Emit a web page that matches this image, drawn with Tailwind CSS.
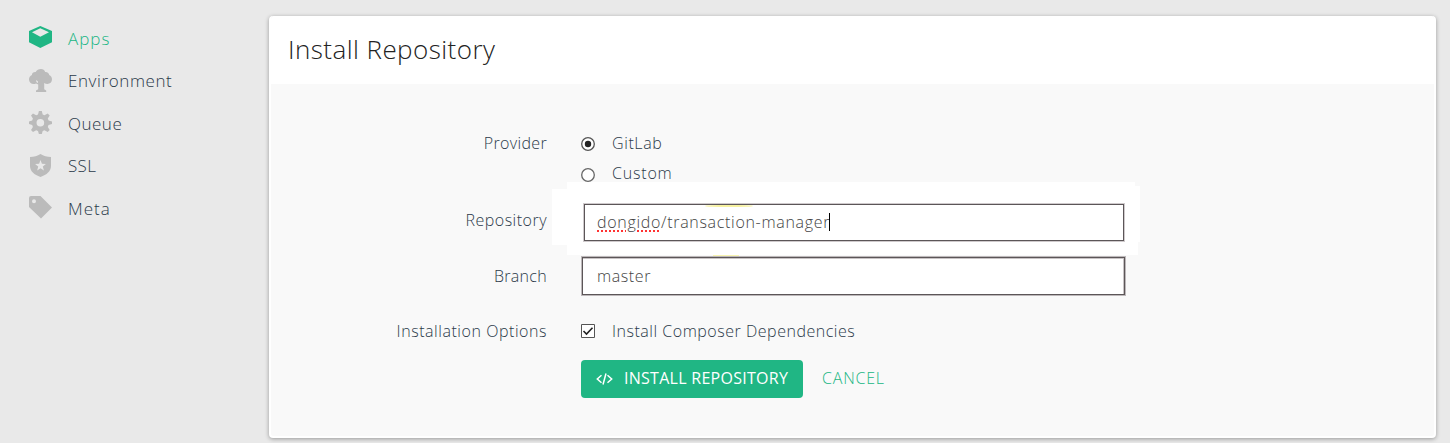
<!DOCTYPE html>
<html lang="en">
<head>
<meta charset="utf-8">
<title>Install Repository</title>
<script src="https://cdn.jsdelivr.net/npm/@tailwindcss/browser@4"></script>
</head>
<body class="h-[443px] overflow-hidden bg-[#e9e9e9] font-['Open_Sans',sans-serif] font-light text-[#2b3a49]">
<div class="flex h-full">
  <nav class="w-[269px] shrink-0 pt-[17px] pl-[28px] text-[17px]">
    <a class="flex h-[42.5px] items-center gap-[16px] text-[#20b684]">
      <svg class="-mt-[2px] size-6 shrink-0" viewBox="0 0 24 24" fill="currentColor"><path fill-rule="evenodd" d="M12.300 1 24 6v11.200L12.300 23 1 17.200V6zM12.300 3.200 4 7.200l8.300 4.600 8.700-4.600z"/></svg>
      <span class="whitespace-nowrap tracking-[1px]">Apps</span></a>
    <a class="flex h-[42.5px] items-center gap-[16px]">
      <svg class="-mt-[2px] size-6 shrink-0 text-[#bbb]" viewBox="0 0 24 24" fill="currentColor"><path d="M13 1c2 0 3.700 1.100 4.200 2.900 2.200-.2 4 1.200 4 3.100 1.800.7 2.800 2.300 2.800 4.300 0 2.800-2 4.700-4.600 4.700-1.300 0-2.400-.4-3.200-1v6.200l2 1.300V24H8v-1.500l2.200-1.300v-4.700l-2.200-1c-.7.400-1.500.5-2.300.5C3 16 1 14.100 1 11.400c0-2 1.100-3.600 2.900-4.400C3.900 5 5.500 3.700 7.700 3.900 8.500 2.100 10.800 1 13 1zM8.200 11.900c-.2 1.200.1 2.200 1.800 3.200v-1.600z"/></svg>
      <span class="whitespace-nowrap tracking-[0.600px]">Environment</span></a>
    <a class="flex h-[42.5px] items-center gap-[16px]">
      <svg class="-mt-[2px] size-6 shrink-0 text-[#bbb]" viewBox="0 0 24 24" fill="currentColor"><path fill-rule="evenodd" d="m10.900 1 2.900 0 .9 3.500 1.800.8 3.200-1.900 2 2-1.900 3.200.8 1.900 3.400.9v2.700l-3.500.9-.7 1.900 1.900 3.100-2 2-3.200-1.800-1.800.7-.9 3.100h-2.900L10 20.900l-1.800-.7L5 22l-2-2 1.900-3.100-.7-1.900-3.200-.9v-2.700l3.200-.9.7-1.900L3 5.400l2-2 3.200 1.900 1.800-.8zM12.300 8.900a3.800 3.800 0 1 0 .1 7.600 3.800 3.800 0 0 0-.1-7.600z"/></svg>
      <span class="whitespace-nowrap tracking-[0.500px]">Queue</span></a>
    <a class="flex h-[42.5px] items-center gap-[16px]">
      <svg class="-mt-[2px] size-6 shrink-0 text-[#bbb]" viewBox="0 0 24 24" fill="currentColor"><path fill-rule="evenodd" d="M12.500 1c3 2.100 6.500 3 10.500 3v9c0 5.200-4.200 8.700-10.500 11C6.200 21.700 2 18.200 2 13V4c4 0 7.500-.9 10.500-3zm0 6-1.400 3.800-4 .2 3.100 2.500-1 4 3.300-2.200 3.400 2.200-1.100-4 3.100-2.500-4-.2z"/></svg>
      <span class="whitespace-nowrap tracking-[0.300px]">SSL</span></a>
    <a class="flex h-[42.5px] items-center gap-[16px]">
      <svg class="-mt-[2px] size-6 shrink-0 text-[#bbb]" viewBox="0 0 24 24" fill="currentColor"><path fill-rule="evenodd" d="M3 1h9.500L24 12.500 13 23.500 1 12V3a2 2 0 0 1 2-2zm3 3.200a2 2 0 1 0 0 4 2 2 0 0 0 0-4z"/></svg>
      <span class="whitespace-nowrap tracking-[1px]">Meta</span></a>
  </nav>
  <main class="mt-[16px] h-[422px] w-[1167px] shrink-0 rounded-[4px] border-2 border-t-0 border-white bg-[#f9f9f9] shadow-[0_1px_4px_rgba(0,0,0,0.35)]">
    <h1 class="flex h-[68px] items-center rounded-t-[4px] bg-white pb-[2px] pl-[17px] text-[26px] text-[#222]"><span class="whitespace-nowrap tracking-[0.440px]">Install Repository</span></h1>
    <form class="flex flex-col pt-[45px] text-[16px]">
      <div class="flex h-[60px]">
        <div class="flex h-[28px] w-[276px] items-center justify-end"><span class="whitespace-nowrap tracking-[0.350px]">Provider</span></div>
        <div class="ml-[34px] flex flex-col">
          <label class="flex h-[30px] items-center gap-[17px]"><svg class="size-[14px]" viewBox="0 0 14 14"><circle cx="7" cy="7" r="6.300" fill="#fff" stroke="#555" stroke-width="1.300"/><circle cx="7" cy="7" r="3.200" fill="#222"/></svg><span class="whitespace-nowrap pb-[2px] tracking-[0.600px]">GitLab</span></label>
          <label class="flex h-[30px] items-center gap-[17px]"><svg class="mt-[2px] size-[14px]" viewBox="0 0 14 14"><circle cx="7" cy="7" r="6.300" fill="#fff" stroke="#666" stroke-width="1.300"/></svg><span class="whitespace-nowrap pb-[2px] tracking-[0.800px]">Custom</span></label>
        </div>
      </div>
      <div class="relative flex h-[68px] pt-[15px]">
        <div class="absolute top-0 left-[281px] h-[56px] w-[30px] bg-white"></div>
        <div class="absolute -top-[7px] left-[296px] h-[73px] w-[568px] bg-white"></div>
        <div class="absolute -top-[3px] left-[850px] h-[56px] w-[19px] bg-white"></div>
        <div class="absolute top-[53px] left-[850px] h-[13px] w-[17px] bg-white"></div>
        <div class="relative flex h-[32px] w-[276px] items-center justify-end"><span class="whitespace-nowrap tracking-[0.500px]">Repository</span></div>
        <div class="relative ml-[37px] flex h-[37px] w-[540px] items-center border border-[#5c5658] bg-white pb-[2px] pl-[12px] text-[#444] shadow-[0_0_0_1px_#cfcacc]">
          <span class="whitespace-nowrap tracking-[0.690px]"><span class="underline decoration-[#f33] decoration-dotted decoration-[1.500px] underline-offset-[3px]">dongido</span>/transaction-manager</span><i class="-ml-px h-[18px] w-px bg-black"></i>
          <div class="absolute top-0 left-[120px] h-[2px] w-[48px] rounded-[50%] bg-[#f7f2a0]"></div>
        </div>
      </div>
      <div class="relative flex h-[38px]">
        <div class="flex h-[37px] w-[276px] items-center justify-end"><span class="whitespace-nowrap tracking-[0.300px]">Branch</span></div>
        <div class="ml-[35px] flex h-[38px] w-[543px] items-center border border-[#5c5658] bg-white pb-px pl-[14px] text-[#444] shadow-[0_0_0_1px_#bdb8ba,inset_0_1px_0_#c8c3c5,inset_-1px_0_0_#c8c3c5]"><span class="whitespace-nowrap tracking-[0.600px]">master</span></div>
        <div class="absolute -top-[2px] left-[442px] h-px w-[26px] bg-[#f9f5b0]"></div>
      </div>
      <div class="mt-[21px] flex h-[30px] items-center">
        <div class="flex w-[276px] justify-end"><span class="whitespace-nowrap tracking-[0.550px]">Installation Options</span></div>
        <label class="ml-[34px] flex items-center gap-[17px]"><svg class="size-[14px]" viewBox="0 0 14 14"><path d="M.5.5h13v13H.5z" fill="#fff" stroke="#555"/><path d="m2.500 7 3 3 6-6.200" fill="none" stroke="#222" stroke-width="1.600"/></svg><span class="whitespace-nowrap tracking-[0.520px]">Install Composer Dependencies</span></label>
      </div>
      <div class="mt-[14px] ml-[310px] flex h-[38px] items-center">
        <button type="button" class="flex h-[38px] w-[222px] items-center gap-[11px] rounded-[4px] bg-[#20b684] pl-[15px] font-normal text-white"><svg class="h-[12px] w-[17px]" viewBox="0 0 17 12" fill="none" stroke="#fff" stroke-width="1.500"><path d="M5.500 2.300 1.300 6l4.200 3.700M11.500 2.300 15.700 6l-4.200 3.700M10 .5 7 11.500"/></svg><span class="whitespace-nowrap pb-[2px] tracking-[0.270px]">INSTALL REPOSITORY</span></button>
        <a class="ml-[19px] pb-[2px] whitespace-nowrap tracking-[0.800px] text-[#20b684]">CANCEL</a>
      </div>
    </form>
  </main>
</div>
</body>
</html>
